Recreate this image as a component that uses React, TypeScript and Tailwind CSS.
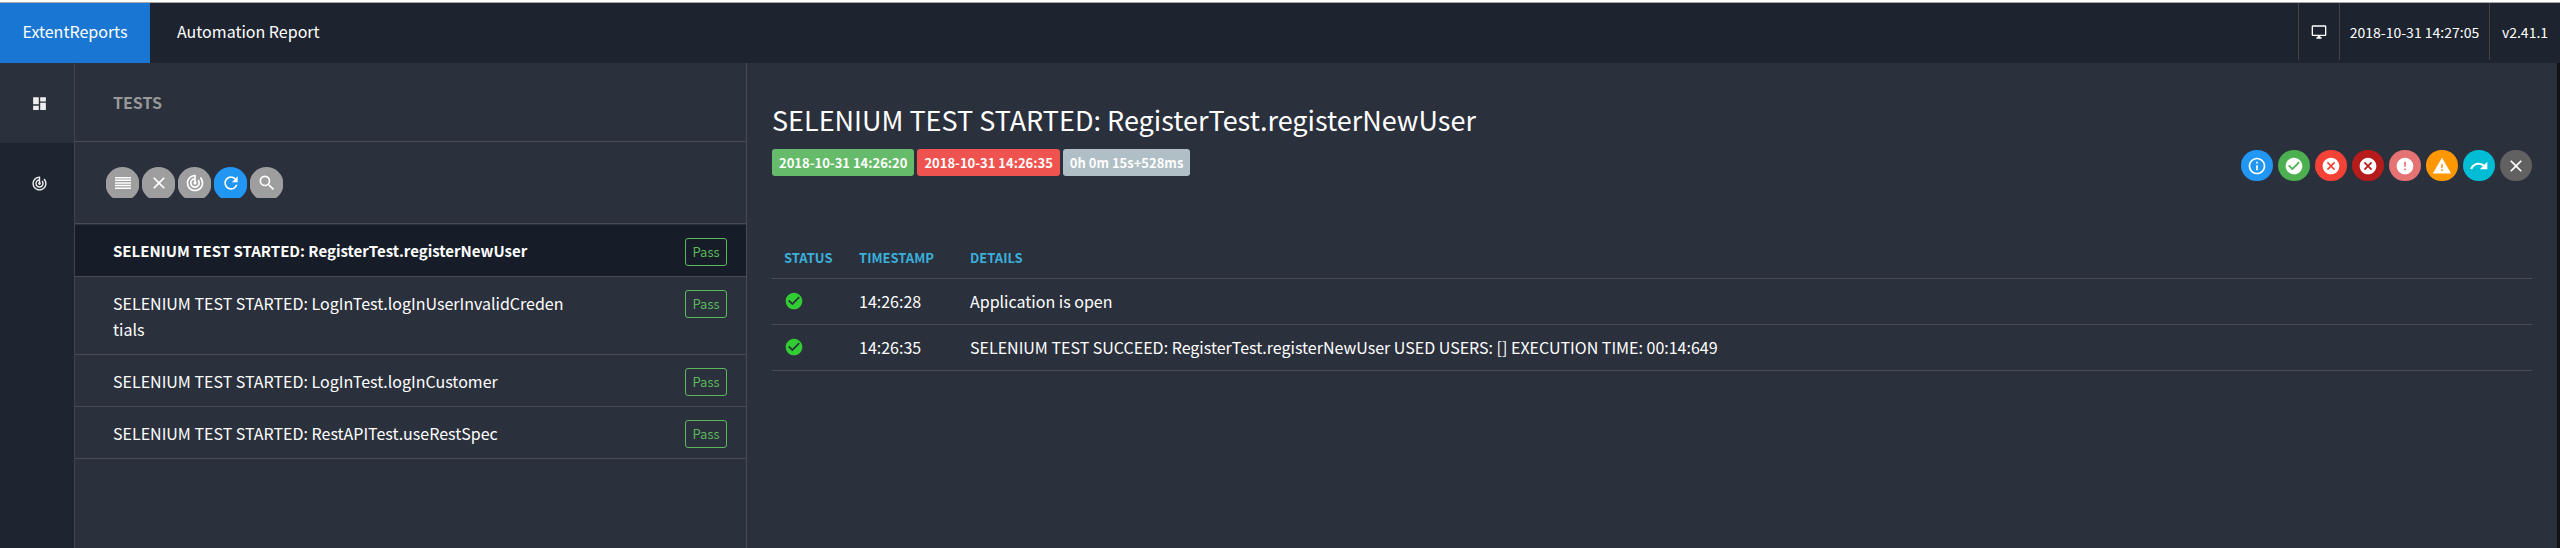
import type { ReactNode } from 'react';
import {
  MdCancel,
  MdCheckCircle,
  MdClose,
  MdDashboard,
  MdError,
  MdOutlineDesktopWindows,
  MdOutlineInfo,
  MdRefresh,
  MdSearch,
  MdTrackChanges,
  MdWarning,
} from 'react-icons/md';

const tests = [
  { name: 'SELENIUM TEST STARTED: RegisterTest.registerNewUser', active: true },
  { name: 'SELENIUM TEST STARTED: LogInTest.logInUserInvalidCredentials', active: false },
  { name: 'SELENIUM TEST STARTED: LogInTest.logInCustomer', active: false },
  { name: 'SELENIUM TEST STARTED: RestAPITest.useRestSpec', active: false },
];

const steps = [
  { time: '14:26:28', details: 'Application is open' },
  {
    time: '14:26:35',
    details:
      'SELENIUM TEST SUCCEED: RegisterTest.registerNewUser USED USERS: [] EXECUTION TIME: 00:14:649',
  },
];

function LinesIcon() {
  return (
    <svg width="16" height="12" viewBox="0 0 16 12" fill="currentColor">
      <path d="M0 0h16v1.5H0zM0 2.6h16v1.5H0zM0 5.2h16v1.5H0zM0 7.8h16v1.5H0zM0 10.4h16v1.5H0z" />
    </svg>
  );
}

function RedoIcon() {
  return (
    <svg width="20" height="20" viewBox="0 0 24 24" fill="currentColor">
      <path d="M18.4 10.6C16.55 8.99 14.15 8 11.5 8c-4.65 0-8.58 3.03-9.96 7.22L3.9 16c1.05-3.19 4.05-5.5 7.6-5.5 1.95 0 3.73.72 5.12 1.88L13 16h9V7z" />
    </svg>
  );
}

type RoundItem = { label: string; color: string; icon: ReactNode };

const tools: RoundItem[] = [
  { label: 'Filter by status', color: 'bg-[#9e9e9e]', icon: <LinesIcon /> },
  { label: 'Clear filters', color: 'bg-[#9e9e9e]', icon: <MdClose size={20} /> },
  { label: 'Toggle dashboard', color: 'bg-[#9e9e9e]', icon: <MdTrackChanges size={20} /> },
  { label: 'Refresh charts', color: 'bg-[#2196f3]', icon: <MdRefresh size={20} /> },
  { label: 'Search', color: 'bg-[#9e9e9e]', icon: <MdSearch size={20} /> },
];

const filters: RoundItem[] = [
  { label: 'Info', color: 'bg-[#2196f3]', icon: <MdOutlineInfo size={20} /> },
  { label: 'Pass', color: 'bg-[#4caf50]', icon: <MdCheckCircle size={20} /> },
  { label: 'Fail', color: 'bg-[#f44336]', icon: <MdCancel size={20} /> },
  { label: 'Fatal', color: 'bg-[#b71c1c]', icon: <MdCancel size={20} /> },
  { label: 'Error', color: 'bg-[#e57373]', icon: <MdError size={20} /> },
  { label: 'Warning', color: 'bg-[#ff9800]', icon: <MdWarning size={20} /> },
  { label: 'Skip', color: 'bg-[#00bcd4]', icon: <RedoIcon /> },
  { label: 'Clear', color: 'bg-[#616161]', icon: <MdClose size={20} /> },
];

function RoundButton({ item, shape }: { item: RoundItem; shape: string }) {
  return (
    <button
      type="button"
      aria-label={item.label}
      className={`flex h-[31px] items-center justify-center text-white ${shape} ${item.color}`}
    >
      {item.icon}
    </button>
  );
}

export default function App() {
  return (
    <div className="flex min-h-screen flex-col bg-[#2a303c] font-['Noto_Sans_CJK_JP','Noto_Sans_CJK_SC',sans-serif] text-base leading-[26px] text-white">
      <header className="flex h-[63px] border-t-2 border-white bg-[#1d2430]">
        <div className="flex grow border-t border-[#a9a9ab]">
          <a href="#" className="flex w-[150px] items-center justify-center bg-[#1976d2] pb-1">
            ExtentReports
          </a>
          <a href="#" className="ml-[27px] flex items-center pb-1">
            Automation Report
          </a>
          <div className="ml-auto flex h-[57px] text-sm">
            <button
              type="button"
              aria-label="Toggle theme"
              className="flex w-[41px] items-center justify-center border-l border-[#444444]"
            >
              <MdOutlineDesktopWindows size={16} />
            </button>
            <span className="flex w-[150px] items-center justify-center border-l border-[#444444]">
              2018-10-31 14:27:05
            </span>
            <span className="flex w-[71px] items-center justify-center border-l border-[#444444]">
              v2.41.1
            </span>
          </div>
        </div>
      </header>

      <div className="flex grow">
        <nav className="flex w-[75px] shrink-0 flex-col border-r border-[#3e434e] bg-[#1e2430] text-[#eeeeee]">
          <a href="#tests" aria-label="Tests" className="flex h-20 items-center justify-center bg-[#2a303c] pl-1">
            <MdDashboard size={17} />
          </a>
          <a href="#dashboard" aria-label="Dashboard" className="flex h-20 items-center justify-center pl-1">
            <MdTrackChanges size={17} />
          </a>
        </nav>

        <section className="w-[672px] shrink-0 border-r border-[#474c57]">
          <h2 className="flex h-[79px] items-center border-b border-[#474c57] pl-[38px] font-bold text-[#999999]">
            TESTS
          </h2>
          <div className="flex h-[82px] items-center gap-[3px] border-b border-[#474c57] pl-[31px]">
            {tools.map((tool) => (
              <RoundButton
                key={tool.label}
                item={tool}
                shape="w-[33px] [clip-path:circle(17px_at_50%_17px)]"
              />
            ))}
          </div>
          <ul className="pt-px">
            {tests.map((test) => (
              <li
                key={test.name}
                className={`flex items-start justify-between border-b border-[#474c57] pt-[13px] pr-[19px] pb-3 pl-[38px] ${
                  test.active ? 'bg-[#171d28] text-[15px] font-bold' : ''
                }`}
              >
                <span className="w-[454px] break-all">{test.name}</span>
                <span className="-mb-1 flex h-7 w-[42px] items-center justify-center rounded-[3px] border border-[#5cb85c] text-[13px] font-normal text-[#5cb85c]">
                  Pass
                </span>
              </li>
            ))}
          </ul>
        </section>

        <main className="grow border-r-3 border-[#131416] px-[25px] pt-9">
          <h1 className="text-[27px] leading-[42px]">
            SELENIUM TEST STARTED: RegisterTest.registerNewUser
          </h1>
          <div className="mt-2 flex items-start justify-between">
            <div className="flex gap-[3px] text-[13px] leading-[27px] font-bold">
              <span className="rounded-[3px] bg-[#66bb6a] px-[7px]">2018-10-31 14:26:20</span>
              <span className="rounded-[3px] bg-[#ef5350] px-[7px]">2018-10-31 14:26:35</span>
              <span className="rounded-[3px] bg-[#b0bec5] px-[7px]">0h 0m 15s+528ms</span>
            </div>
            <div className="flex gap-[5px] pt-px">
              {filters.map((filter) => (
                <RoundButton key={filter.label} item={filter} shape="w-8 rounded-full" />
              ))}
            </div>
          </div>

          <table className="mt-[58px] w-full text-left">
            <thead>
              <tr className="h-[39px] border-b border-[#474c57] text-[13px] text-[#3bafda]">
                <th className="w-[75px] pl-3 font-bold">STATUS</th>
                <th className="w-[111px] pl-3 font-bold">TIMESTAMP</th>
                <th className="pl-3 font-bold">DETAILS</th>
              </tr>
            </thead>
            <tbody>
              {steps.map((step) => (
                <tr key={step.time} className="h-[46px] border-b border-[#474c57]">
                  <td className="pl-3">
                    <MdCheckCircle size={20} color="#32cd32" aria-label="pass" />
                  </td>
                  <td className="pl-3">{step.time}</td>
                  <td className="pl-3">{step.details}</td>
                </tr>
              ))}
            </tbody>
          </table>
        </main>
      </div>
    </div>
  );
}
